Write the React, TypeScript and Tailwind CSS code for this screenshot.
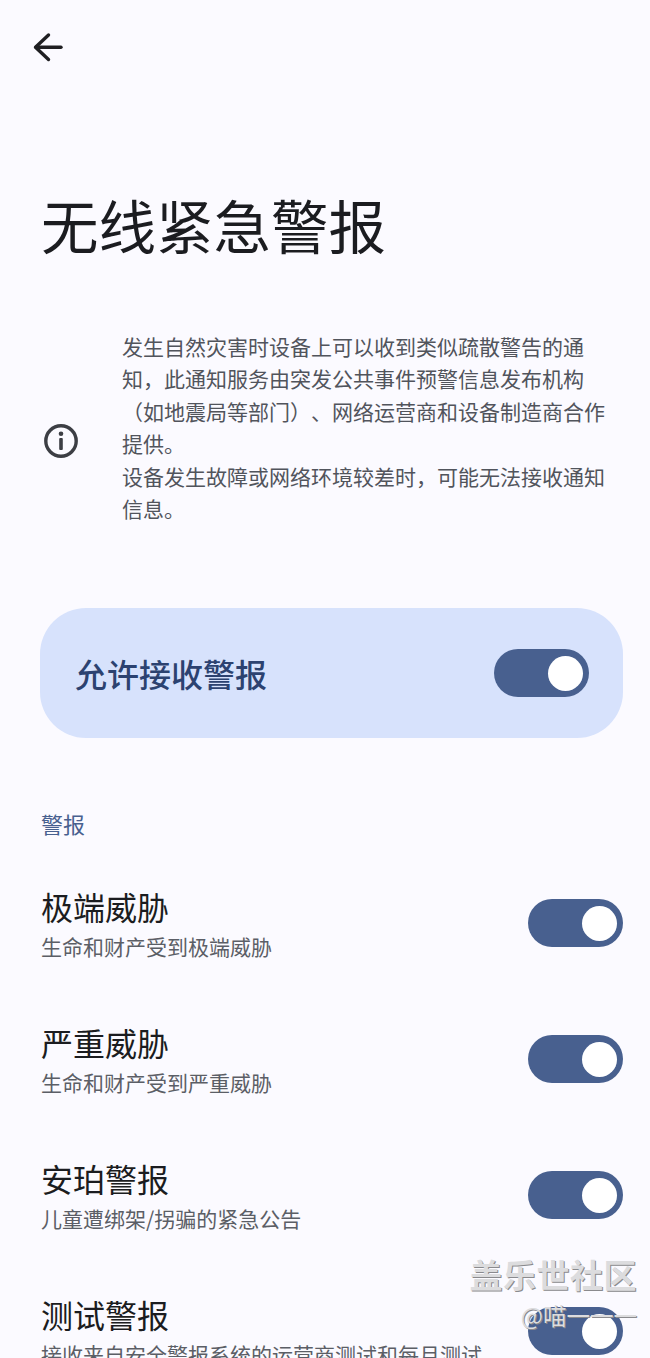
const FONT = "font-['Noto_Sans_CJK_SC','Noto_Sans',sans-serif]";

function Toggle() {
  return (
    <div className="flex h-[48px] w-[95px] shrink-0 items-center justify-end rounded-full bg-[#48608f] pr-[6px]">
      <div className="h-[35px] w-[35px] rounded-full bg-white" />
    </div>
  );
}

function Row({ title, sub }: { title: string; sub: string }) {
  return (
    <div className="flex h-[136px] items-center justify-between pl-[41px] pr-[27px]">
      <div>
        <div className="text-[32px] leading-[44px] text-[#1b1c20]">{title}</div>
        <div className="mt-[2px] whitespace-nowrap text-[21px] leading-[32px] text-[#5b5e66]">{sub}</div>
      </div>
      <Toggle />
    </div>
  );
}

export default function App() {
  return (
    <div className={`${FONT} relative h-[1358px] w-[650px] overflow-hidden bg-[#fbfaff]`}>
      <div className="pl-[32px] pt-[32px]">
        <svg width="32" height="32" viewBox="0 0 32 32" fill="none" stroke="#1f1f22" strokeWidth="3.4" strokeLinecap="round" strokeLinejoin="round">
          <path d="M29 15.2H4" />
          <path d="M16.5 3L3.5 15.2L16.5 27.5" />
        </svg>
      </div>

      <h1 className="mt-[120px] pl-[41px] text-[57.5px] font-normal leading-[80px] text-[#1b1c20]">无线紧急警报</h1>

      <div className="mt-[66px] flex items-center pl-[43px]">
        <svg width="36" height="36" viewBox="0 0 36 36" fill="none" className="mt-[28px] shrink-0">
          <circle cx="18" cy="18" r="15.2" stroke="#3c3e44" strokeWidth="3.4" />
          <circle cx="18" cy="10.8" r="2.3" fill="#3c3e44" />
          <rect x="16.2" y="15" width="3.6" height="12" rx="1" fill="#3c3e44" />
        </svg>
        <p className="ml-[43px] w-[490px] text-[21px] leading-[32.4px] text-[#51545c] [text-spacing-trim:space-all]">
          <span className="block whitespace-nowrap">发生自然灾害时设备上可以收到类似疏散警告的通</span>
          <span className="block whitespace-nowrap">知，此通知服务由突发公共事件预警信息发布机构</span>
          <span className="block whitespace-nowrap">（如地震局等部门）、网络运营商和设备制造商合作</span>
          <span className="block whitespace-nowrap">提供。</span>
          <span className="block whitespace-nowrap">设备发生故障或网络环境较差时，可能无法接收通知</span>
          <span className="block whitespace-nowrap">信息。</span>
        </p>
      </div>

      <div className="ml-[40px] mr-[27px] mt-[84px] flex h-[130px] items-center justify-between rounded-[46px] bg-[#d7e2fc] pl-[35px] pr-[34px]">
        <span className="text-[32px] font-medium leading-[44px] text-[#2c4270]">允许接收警报</span>
        <Toggle />
      </div>

      <div className="mt-[68px] pl-[41px] text-[22px] leading-[34px] text-[#48608f]">警报</div>

      <div className="mt-[15px]">
        <Row title="极端威胁" sub="生命和财产受到极端威胁" />
        <Row title="严重威胁" sub="生命和财产受到严重威胁" />
        <Row title="安珀警报" sub="儿童遭绑架/拐骗的紧急公告" />
        <Row title="测试警报" sub="接收来自安全警报系统的运营商测试和每月测试" />
      </div>

      <div className="absolute right-[13px] top-[1253px] text-right text-[#dcdcde] [text-shadow:1px_1px_0_#8a8a8d]">
        <div className="text-[33px] font-bold leading-[42px] tracking-[0.5px]">盖乐世社区</div>
        <div className="mt-[3px] text-[23.5px] leading-[34px]">@喵一一一</div>
      </div>
    </div>
  );
}
